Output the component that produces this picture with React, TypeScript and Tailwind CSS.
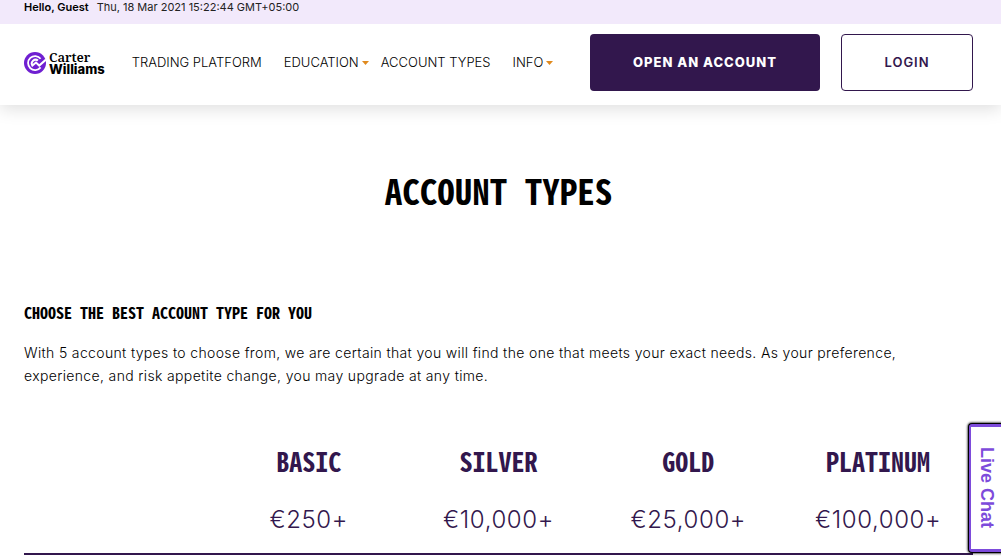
import React from "react";

const navLinks = [
  { label: "TRADING PLATFORM", dropdown: false },
  { label: "EDUCATION", dropdown: true },
  { label: "ACCOUNT TYPES", dropdown: false },
  { label: "INFO", dropdown: true },
];

const accounts = [
  { name: "BASIC", deposit: "€250+" },
  { name: "SILVER", deposit: "€10,000+" },
  { name: "GOLD", deposit: "€25,000+" },
  { name: "PLATINUM", deposit: "€100,000+" },
];

const headingFont =
  "font-['Noto_Sans_Mono_CJK_SC','DejaVu_Sans_Mono',monospace] font-bold";

const Logo = () => (
  <a href="#" className="flex shrink-0 items-center gap-[3px] text-black">
    <svg width="22" height="22" viewBox="0 0 22 22" aria-hidden="true">
      <circle cx="11" cy="11" r="11" fill="#6f1fd1" />
      <path
        d="M16.6 6.8A7 7 0 1 0 16.6 15.4"
        fill="none"
        stroke="#fff"
        strokeWidth="1.8"
      />
      <path
        d="M14 8.6A3.8 3.8 0 0 0 8.4 13.6L12 10.6L15.2 13.6L22 7.6"
        fill="none"
        stroke="#fff"
        strokeWidth="2"
      />
    </svg>
    <span className="flex flex-col text-[13px] leading-3">
      <span className="font-['Noto_Serif','Liberation_Serif',serif] font-semibold">
        Carter
      </span>
      <span className="font-['Inter',sans-serif] font-extrabold">Williams</span>
    </span>
  </a>
);

const Header = () => (
  <header>
    <div className="relative z-10 bg-[#f2e9fb] px-6 pb-[10px] text-[11px] leading-[14px] text-[#222]">
      <span className="mr-2 font-semibold text-black">Hello, Guest</span>
      <span>Thu, 18 Mar 2021 15:22:44 GMT+05:00</span>
    </div>
    <div className="flex items-center px-6 pt-[10px] pb-[14px] shadow-[0_4px_16px_rgba(0,0,0,0.13)]">
      <Logo />
      <nav className="ml-[27px] flex gap-3 text-[13px] font-light text-black">
        {navLinks.map((link) => (
          <a
            key={link.label}
            href="#"
            className="flex w-max items-center gap-[3px] whitespace-nowrap"
          >
            {link.label}
            {link.dropdown ? (
              <svg width="7" height="4" viewBox="0 0 7 4" aria-hidden="true">
                <path d="M0 0H7L3.5 4Z" fill="#e08a1e" />
              </svg>
            ) : (
              <span className="w-[7px]" />
            )}
          </a>
        ))}
      </nav>
      <div className="mr-1 ml-auto flex shrink-0 gap-[21px] text-[13px] tracking-[1px]">
        <button className="h-[57px] w-[230px] rounded-[4px] bg-[#32174d] font-extrabold text-white">
          OPEN AN ACCOUNT
        </button>
        <button className="h-[57px] w-[132px] rounded-[4px] border border-[#32174d] font-semibold text-[#32174d]">
          LOGIN
        </button>
      </div>
    </div>
  </header>
);

const App = () => {
  return (
    <div className="bg-white font-['Inter',sans-serif] text-black">
      <Header />
      <main className="pt-[65px] pr-7 pl-6">
        <h1 className={"text-center text-[35px] leading-10 " + headingFont}>
          ACCOUNT TYPES
        </h1>
        <h2 className={"mt-[90px] text-[16px] leading-6 " + headingFont}>
          CHOOSE THE BEST ACCOUNT TYPE FOR YOU
        </h2>
        <p className="mt-[17px] max-w-[900px] text-[14px] leading-[23px] font-light tracking-wide">
          With 5 account types to choose from, we are certain that you will find
          the one that meets your exact needs. As your preference, experience,
          and risk appetite change, you may upgrade at any time.
        </p>
        <table className="mt-[52px] w-full table-fixed border-b-2 border-[#32174d] text-center text-[#32174d]">
          <thead>
            <tr className={"h-11 text-[26px] leading-10 " + headingFont}>
              <td />
              {accounts.map((account) => (
                <th key={account.name} scope="col">
                  {account.name}
                </th>
              ))}
            </tr>
          </thead>
          <tbody>
            <tr className="h-[71px] text-[24px] font-light tracking-wide">
              <td />
              {accounts.map((account) => (
                <td key={account.name} className="pt-1">
                  {account.deposit}
                </td>
              ))}
            </tr>
          </tbody>
        </table>
      </main>
      {/* chat tab pinned to the window edge */}
      <button className="fixed right-0 bottom-[6px] flex h-[130px] w-[33px] items-center justify-center rounded-l-[4px] border border-r-0 border-black bg-[#7d4bdb] py-[3px] pl-[2px] shadow-[0_0_2px_1px_rgba(0,0,0,0.6)]">
        <span className="flex h-full w-full items-center justify-center bg-white font-['Liberation_Sans',sans-serif] text-[18px] font-bold text-[#7d4bdb] [writing-mode:vertical-rl]">
          Live Chat
        </span>
      </button>
    </div>
  );
};

export default App;
